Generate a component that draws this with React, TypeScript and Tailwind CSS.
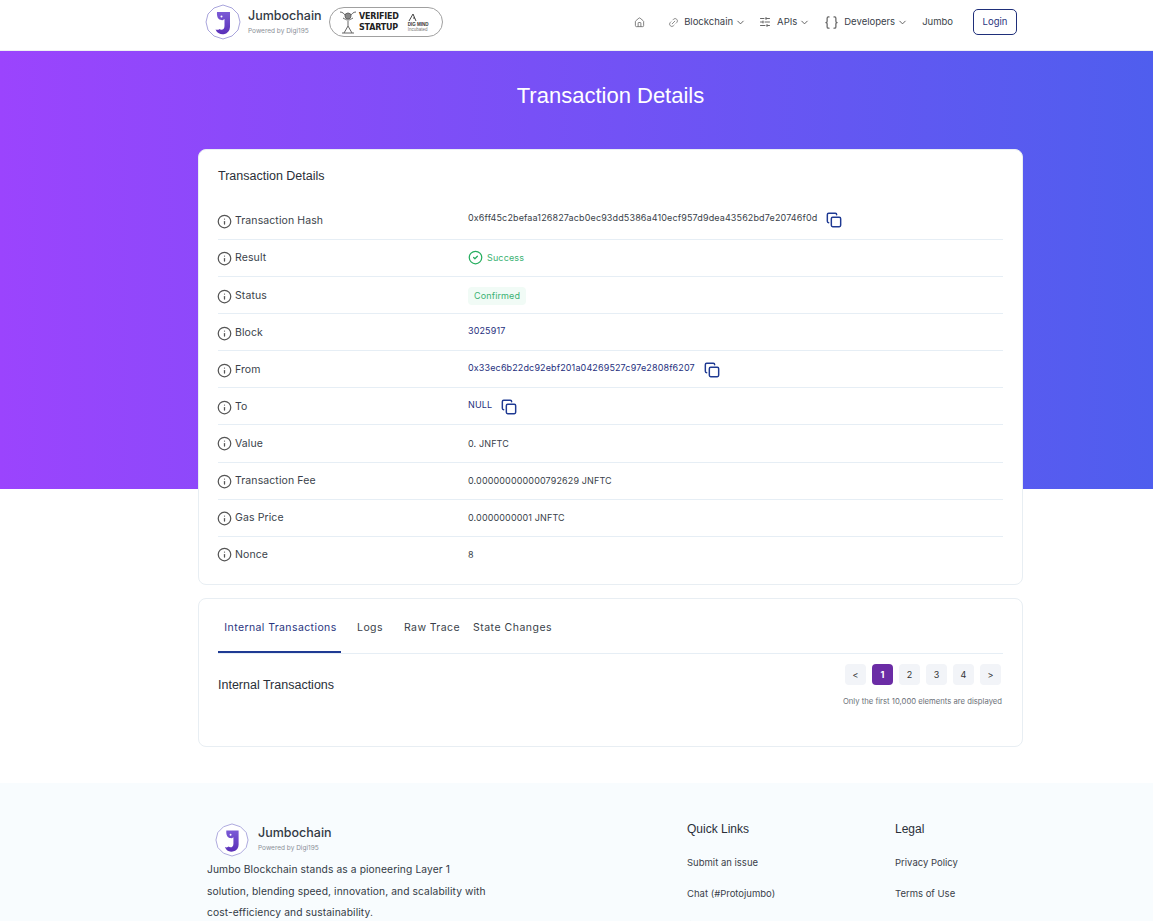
import React from "react";
import { ChevronDown, CircleCheck, Copy, Home, Info, Link2, SlidersHorizontal, Braces } from "lucide-react";

const font = "font-['Inter','Liberation_Sans',sans-serif]";

const Logo = ({ size = 36 }: { size?: number }) => (
  <svg width={size} height={size} viewBox="0 0 36 36" fill="none">
    <defs>
      <linearGradient id="jumbo" x1="0" y1="0" x2="0" y2="1">
        <stop offset="0" stopColor="#7b5bd6" />
        <stop offset="1" stopColor="#5a2fb8" />
      </linearGradient>
    </defs>
    <polygon points="18,1 27,4 33,10 35,18 33,26 27,32 18,35 9,32 3,26 1,18 3,10 9,4" stroke="#a9a5dc" strokeWidth="1" fill="#fff" />
    <path d="M12 8h13v15a7.500 7.500 0 0 1-14.500 2.500c1.500.5 3 .5 4-.5 1 1.200 5 1.500 5-3v-7c-1 1-2 1.500-3 1-3 0-5-3-4.500-8z" fill="url(#jumbo)" />
    <circle cx="16.500" cy="12.500" r="1" fill="#fff" />
  </svg>
);

const Badge = () => (
  <div className="flex h-[30px] w-[114px] items-center rounded-full border border-[#a0a0a0] bg-white pl-2 pr-1">
    <svg width="20" height="26" viewBox="0 0 20 26" fill="none" stroke="#666" strokeWidth="1">
      <path d="M2 3c3 0 4 2 5 3l3 4 3-4c1-1 2-3 5-3M5 9c2 1 3 2 5 2s3-1 5-2M10 12v5M4 24h12M6 24l4-7 4 7" />
      <circle cx="10" cy="7" r="3" fill="#888" />
    </svg>
    <div className="ml-[1px] font-['DejaVu_Sans',sans-serif] text-[8px] leading-[11px] font-bold tracking-tight text-[#222]">
      <div>VERIFIED</div>
      <div>STARTUP</div>
    </div>
    <div className="ml-[9px] flex flex-col items-start font-['Liberation_Sans',sans-serif] text-[4.5px] leading-[5px] font-bold text-[#333]">
      <svg width="22" height="9" viewBox="0 0 22 9" fill="none" stroke="#444" strokeWidth="1">
        <path d="M1 8l4-7 3 7M5 5h2" />
      </svg>
      <span>DIG MIND</span>
      <span className="font-normal text-[#777]">Incubated</span>
    </div>
  </div>
);

const NavItem = ({ icon, label }: { icon: React.ReactNode; label: string }) => (
  <div className="flex items-center">
    {icon}
    <span className="text-[9.5px] text-[#3a3f4a]">{label}</span>
    <ChevronDown size={11} className="ml-[2px] text-[#555]" />
  </div>
);

type RowProps = {
  label: string;
  children: React.ReactNode;
  rowClass?: string;
  valueClass?: string;
};

// rows in the picture sit a px up or down from each other, hence the two class props
const DetailRow = ({ label, children, rowClass = "h-[37px] border-b border-[#e6eef5]", valueClass = "-translate-y-[2px]" }: RowProps) => (
  <div className={`flex items-center ${rowClass}`}>
    <div className="flex w-[250px] items-center gap-[3px] text-[10.500px] tracking-[0.1px] text-[#3a3f4a]">
      <Info size={15} strokeWidth={2} className="-ml-[1px] text-[#555]" />
      {label}
    </div>
    <div className={`flex items-center text-[9px] tracking-[0.13px] text-[#3a3f4a] ${valueClass}`}>{children}</div>
  </div>
);

const CopyIcon = () => <Copy size={16} strokeWidth={2.2} className="mt-[4px] ml-[9px] text-[#1f3a93]" />;

const PageButton = ({ label, active }: { label: string; active?: boolean }) => (
  <div className={`flex h-[21px] w-[21px] items-center justify-center rounded text-[9px] ${active ? "bg-[#6b2ca5] font-bold text-white" : "bg-[#f2f4f8] text-[#333]"}`}>
    {label}
  </div>
);

export default function App() {
  return (
    <div className={`${font} h-[921px] overflow-hidden bg-white`}>
      {/* top bar */}
      <header className="flex h-[51px] items-center border-b border-[#eef0f3] bg-white pb-[6px] pl-[205px] pr-[136px]">
        <Logo />
        <div className="ml-[7px] mr-[5px] w-[76px]">
          <div className="text-[12.500px] leading-[18px] font-medium text-[#333a45]">Jumbochain</div>
          <div className="text-[6.500px] leading-[13px] text-[#8a8f98]">Powered by Digi195</div>
        </div>
        <Badge />
        <nav className="ml-auto flex items-center">
          <Home size={11} className="mr-[23px] text-[#777]" />
          <NavItem label="Blockchain" icon={<Link2 size={11} className="mr-[5px] -rotate-45 text-[#888]" />} />
          <div className="w-[13px]" />
          <NavItem label="APIs" icon={<SlidersHorizontal size={12} className="mr-[6px] text-[#666]" />} />
          <div className="w-[14px]" />
          <NavItem label="Developers" icon={<Braces size={15} className="mr-[5px] text-[#666]" />} />
          <span className="ml-[14px] text-[9.500px] text-[#3a3f4a]">Jumbo</span>
          <div className="ml-[20px] flex h-[26px] w-[44px] items-center justify-center rounded-[5px] border border-[#1f2f7a] text-[9.500px] text-[#2a3580]">Login</div>
        </nav>
      </header>

      {/* gradient banner with the details card over it */}
      <div className="bg-[linear-gradient(to_bottom,transparent_438px,#fff_438px),linear-gradient(90deg,#9b44fd,#4f5eee)] pl-[198px] pt-[32px]">
        <h1 className="w-[825px] text-center font-['Liberation_Sans',sans-serif] text-[22px] leading-[26px] text-white">Transaction Details</h1>

        <section className="mt-[40px] w-[825px] rounded-lg border border-[#e8eef3] bg-white px-[19px] pb-[10px] pt-[19px]">
          <h2 className="font-['Liberation_Sans',sans-serif] text-[12.500px] leading-[15px] text-[#2a2f38]">Transaction Details</h2>
          <div className="mt-[19px]">
            <DetailRow label="Transaction Hash" valueClass="-translate-y-[3px]">
              0x6ff45c2befaa126827acb0ec93dd5386a410ecf957d9dea43562bd7e20746f0d
              <CopyIcon />
            </DetailRow>
            <DetailRow label="Result">
              <CircleCheck size={15} strokeWidth={2} className="translate-y-[1px] text-[#27ae60]" />
              <span className="ml-[4px] translate-y-[2px] text-[#3bb273]">Success</span>
            </DetailRow>
            <DetailRow label="Status" rowClass="h-[37px] border-b border-[#e6eef5] pt-[2px]">
              <span className="translate-y-[2px] rounded bg-[#f1fbf6] px-[6px] py-[2px] text-[#3bb273]">Confirmed</span>
            </DetailRow>
            <DetailRow label="Block" rowClass="h-[37px] border-b border-[#e6eef5] pt-[2px]">
              <span className="text-[#26307e]">3025917</span>
            </DetailRow>
            <DetailRow label="From" rowClass="h-[37px] border-b border-[#e6eef5] pt-[2px]">
              <span className="text-[#26307e]">0x33ec6b22dc92ebf201a04269527c97e2808f6207</span>
              <CopyIcon />
            </DetailRow>
            <DetailRow label="To" rowClass="h-[37px] border-b border-[#e6eef5] pt-[2px]">
              <span className="text-[#26307e]">NULL</span>
              <CopyIcon />
            </DetailRow>
            <DetailRow label="Value" rowClass="h-[38px] border-b border-[#e6eef5]" valueClass="">0. JNFTC</DetailRow>
            <DetailRow label="Transaction Fee" valueClass="">0.000000000000792629 JNFTC</DetailRow>
            <DetailRow label="Gas Price" valueClass="">0.0000000001 JNFTC</DetailRow>
            <DetailRow label="Nonce" rowClass="h-[37px] pb-[2px]" valueClass="">8</DetailRow>
          </div>
        </section>

        {/* tabs card */}
        <section className="mt-[13px] h-[149px] w-[825px] rounded-lg border border-[#e8eef3] bg-white px-[19px]">
          <div className="flex h-[55px] items-end border-b border-[#e6eef5] text-[10.500px] tracking-[0.4px] text-[#3a3f4a]">
            <div className="flex h-[55px] w-[123px] items-center justify-center border-b-2 border-[#1f3a93] pl-[2px] pt-[7px] text-[#2a3580]">Internal Transactions</div>
            <div className="flex h-[55px] w-[58px] items-center justify-center pt-[5px]">Logs</div>
            <div className="flex h-[55px] w-[62px] items-center pl-[5px] pt-[5px]">Raw Trace</div>
            <div className="flex h-[55px] items-center pl-[12px] pt-[5px] tracking-[0.5px]">State Changes</div>
          </div>
          <div className="flex justify-between pt-[10px]">
            <h3 className="mt-[14px] font-['Liberation_Sans',sans-serif] text-[12.500px] leading-[15px] text-[#2a2f38]">Internal Transactions</h3>
            <div className="flex flex-col items-end">
              <div className="flex gap-[6px] pr-[2px]">
                <PageButton label="<" />
                <PageButton label="1" active />
                <PageButton label="2" />
                <PageButton label="3" />
                <PageButton label="4" />
                <PageButton label=">" />
              </div>
              <div className="mt-[11px] pr-[1px] text-[7.700px] text-[#6b7078]">Only the first 10,000 elements are displayed</div>
            </div>
          </div>
        </section>
      </div>

      {/* footer */}
      <footer className="mt-[36px] flex h-[200px] bg-[#f8fcfe] pl-[207px] pt-[39px]">
        <div className="w-[480px]">
          <div className="mt-[1px] flex items-center pl-[8px]">
            <Logo size={34} />
            <div className="ml-[9px]">
              <div className="text-[12.500px] leading-[16px] font-medium text-[#333a45]">Jumbochain</div>
              <div className="text-[6.500px] leading-[14px] text-[#8a8f98]">Powered by Digi195</div>
            </div>
          </div>
          <p className="mt-[2px] w-[285px] text-[10.250px] leading-[21.500px] tracking-[0.1px] text-[#333a45]">
            Jumbo Blockchain stands as a pioneering Layer 1 solution, blending speed, innovation, and scalability with cost-efficiency and sustainability.
          </p>
        </div>
        <div className="w-[208px] text-[9.500px] text-[#3a3f4a]">
          <h4 className="font-['Liberation_Sans',sans-serif] text-[12px] leading-[14px] text-[#2a2f38]">Quick Links</h4>
          <div className="mt-[20px]">Submit an issue</div>
          <div className="mt-[17px]">Chat (#Protojumbo)</div>
          <div className="mt-[17px]">🦊 Add Protojumbo</div>
        </div>
        <div className="text-[9.500px] text-[#3a3f4a]">
          <h4 className="font-['Liberation_Sans',sans-serif] text-[12px] leading-[14px] text-[#2a2f38]">Legal</h4>
          <div className="mt-[20px]">Privacy Policy</div>
          <div className="mt-[17px]">Terms of Use</div>
          <div className="mt-[17px]">Contact Us</div>
        </div>
      </footer>
    </div>
  );
}
